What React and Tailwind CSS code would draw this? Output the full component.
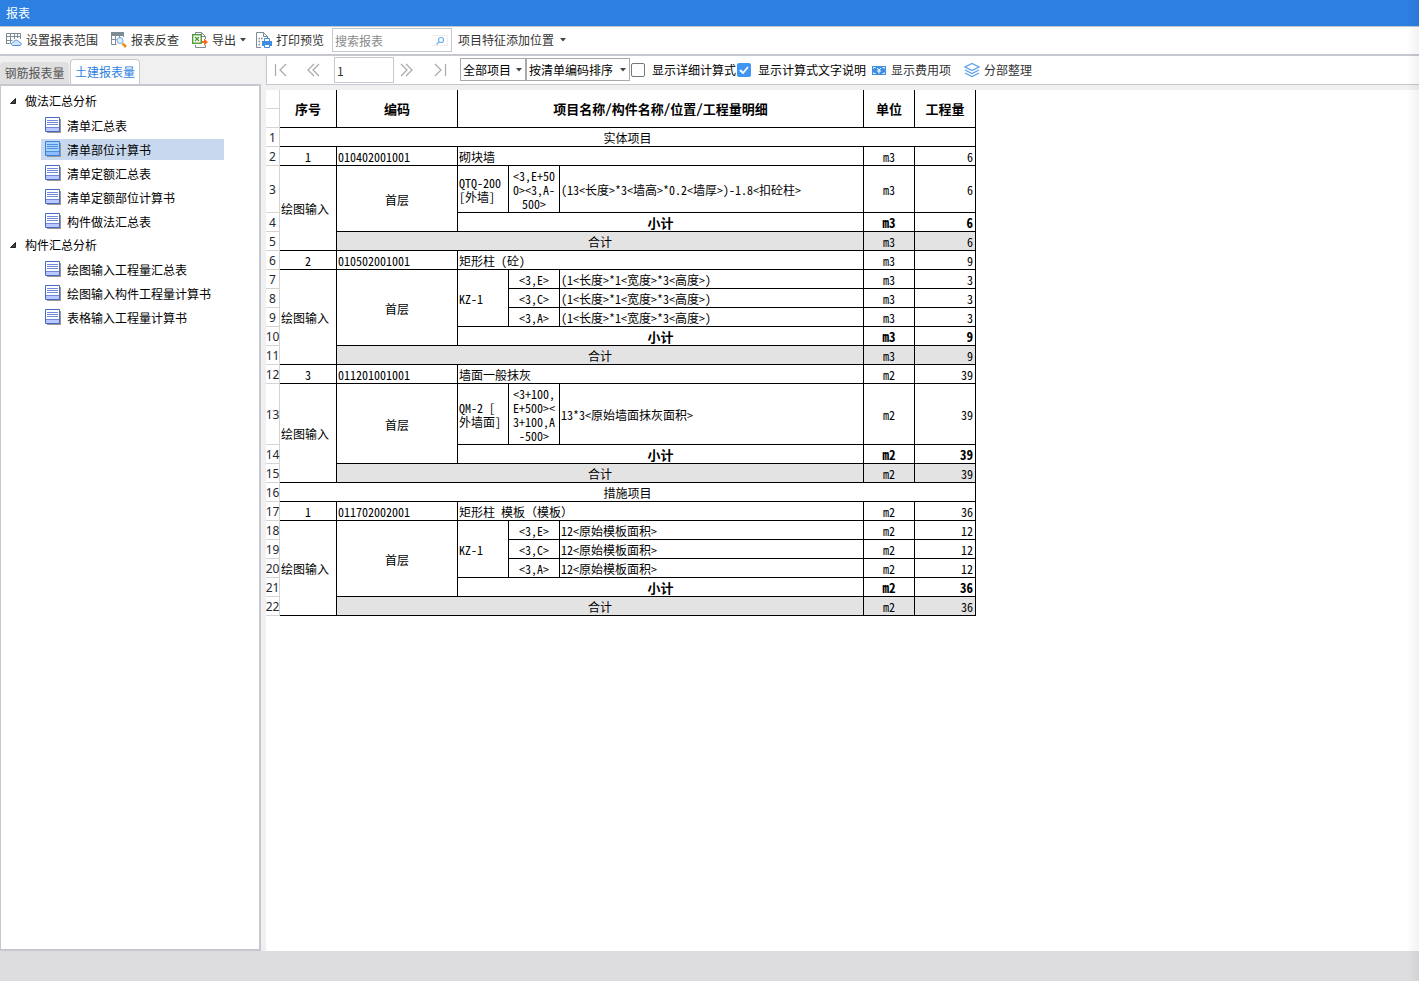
import React, { useState } from "react";

// Tree on the left side
const treeData = [
  {
    title: "做法汇总分析",
    items: ["清单汇总表", "清单部位计算书", "清单定额汇总表", "清单定额部位计算书", "构件做法汇总表"],
  },
  {
    title: "构件汇总分析",
    items: ["绘图输入工程量汇总表", "绘图输入构件工程量计算书", "表格输入工程量计算书"],
  },
];

// Report blocks: a section title or one bill item with its details
const reportData = [
  { section: "实体项目" },
  {
    no: "1",
    code: "010402001001",
    name: "砌块墙",
    unit: "m3",
    total: "6",
    component: "QTQ-200\n[外墙]",
    details: [
      {
        position: "<3,E+50\n0><3,A-\n500>",
        formula: "(13<长度>*3<墙高>*0.2<墙厚>)-1.8<扣砼柱>",
        value: "6",
        height: "h-[47px]",
      },
    ],
  },
  {
    no: "2",
    code: "010502001001",
    name: "矩形柱 (砼)",
    unit: "m3",
    total: "9",
    component: "KZ-1",
    details: [
      { position: "<3,E>", formula: "(1<长度>*1<宽度>*3<高度>)", value: "3" },
      { position: "<3,C>", formula: "(1<长度>*1<宽度>*3<高度>)", value: "3" },
      { position: "<3,A>", formula: "(1<长度>*1<宽度>*3<高度>)", value: "3" },
    ],
  },
  {
    no: "3",
    code: "011201001001",
    name: "墙面一般抹灰",
    unit: "m2",
    total: "39",
    component: "QM-2 [\n外墙面]",
    details: [
      {
        position: "<3+100,\nE+500><\n3+100,A\n-500>",
        formula: "13*3<原始墙面抹灰面积>",
        value: "39",
        height: "h-[61px]",
      },
    ],
  },
  { section: "措施项目" },
  {
    no: "1",
    code: "011702002001",
    name: "矩形柱 模板",
    note: "（模板）",
    unit: "m2",
    total: "36",
    component: "KZ-1",
    details: [
      { position: "<3,E>", formula: "12<原始模板面积>", value: "12" },
      { position: "<3,C>", formula: "12<原始模板面积>", value: "12" },
      { position: "<3,A>", formula: "12<原始模板面积>", value: "12" },
    ],
  },
];

const Caret = () => (
  <svg className="w-[6px] h-[4px] shrink-0" viewBox="0 0 6 4" fill="#444">
    <path d="M0 0h6L3 3.5z" />
  </svg>
);

const RangeIcon = () => (
  <svg className="w-4 h-4 shrink-0" viewBox="0 0 16 16" fill="none" stroke="#7d8b97">
    <path d="M.5 12V1.500h14V7M.5 4.500h14M.5 8.500h6M4.500 1.500v10M8.500 1.500V7M11.500 1.500V6M.5 11.500h4" />
    <path d="M6.500 13.500c-2-.8-1-3.500 1-3.300 1-2.700 4.500-2.700 5.500 0 2.500 0 3 2.500 1 3.300z" fill="#cfe4fb" stroke="#4a8fe0" />
  </svg>
);

const CheckIcon = () => (
  <svg className="w-4 h-4 shrink-0" viewBox="0 0 16 16" fill="none" stroke="#7d8b97">
    <path d="M.5 12.500V1.500h12V5M.5 7.500h5M.5 12.500h5M4.500 4v8M8.500 4v2" />
    <path d="M0 0h13v4H0z" fill="#7d8b97" stroke="none" />
    <circle cx="9" cy="8.500" r="3" fill="#dcecff" stroke="#7ba6e0" />
    <path d="M11.500 11.500l3.500 3.500" stroke="#f08c1a" strokeWidth="2.500" />
  </svg>
);

const ExportIcon = () => (
  <svg className="w-4 h-4 shrink-0" viewBox="0 0 16 16" fill="none">
    <path d="M3.500 2V.5h6l4 4V7M13.500 13v2.500h-10V13M9.500.5v4h4" stroke="#7d8b97" />
    <rect x=".7" y="2.700" width="8.500" height="8.500" fill="#fff" stroke="#4f9a32" strokeWidth="1.400" />
    <path d="M3 5l4 4M7 5L3 9" stroke="#4f9a32" strokeWidth="1.300" />
    <path d="M10 9h2V6.500l4 3.500-4 3.500V11h-2z" fill="#f26b1d" />
  </svg>
);

const PrintIcon = () => (
  <svg className="w-4 h-4 shrink-0" viewBox="0 0 16 16" fill="none">
    <path d="M5 15.500H.5V.5h7l4 4V6M7.500.5v4h4" stroke="#7d8b97" />
    <path d="M2.500 6.500h1.500M2.500 9.500h1.500M2.500 12.500h1.500M5 6.500h1.500" stroke="#7d8b97" strokeWidth="1.500" />
    <path d="M6 9h10v5H6z" fill="#3f8ce0" />
    <path d="M8.500 6.500h5v3h-5zM8.500 12.500h5v3h-5z" fill="#fff" stroke="#3f8ce0" />
  </svg>
);

const SearchIcon = () => (
  <svg className="w-4 h-[11px]" viewBox="0 0 16 11" fill="none">
    <path d="M0 .5h15.500v10H0" stroke="#eee" />
    <circle cx="9" cy="5" r="2.500" stroke="#6cb0ee" strokeWidth="1.200" />
    <path d="M7 7L4.500 9.500" stroke="#6cb0ee" strokeWidth="1.300" />
  </svg>
);

const MoneyIcon = () => (
  <svg className="w-4 h-4 shrink-0" viewBox="0 0 16 16">
    <path d="M1 4h14v9H1z" fill="#4090e2" />
    <path d="M2.500 6.500v-1h2M11.500 5.500h2v1M2.500 10.500v1h2M11.500 11.500h2v-1" fill="none" stroke="#fff" />
    <path d="M6 6l2 2 2-2M8 8v3.500M6 9h4" fill="none" stroke="#fff" />
  </svg>
);

const LayersIcon = () => (
  <svg className="w-4 h-4 shrink-0" viewBox="0 0 16 16" fill="none" stroke="#5b9fe8" strokeWidth="1.200">
    <path d="M8 1.500L15 5 8 8.500 1 5zM1 8l7 3.500L15 8M1 11l7 3.500 7-3.500" />
  </svg>
);

const ReportIcon = ({ active }) => (
  <svg className="w-4 h-4 shrink-0 self-start mt-[2px]" viewBox="0 0 16 16">
    <path d="M2 2h14v14H2z" fill="#9a9a9a" />
    <path d="M.5.5h14v14H.5z" fill={active ? "#a9d2ff" : "#fff"} stroke={active ? "#3b7fd6" : "#4a66bb"} />
    <path d="M1 11h13v3H1z" fill={active ? "#8ebcff" : "#b9c9ff"} />
    <path d="M2 3.500h11M2 5.500h11M2 7.500h11M1 10.500h13" stroke={active ? "#4f8fe0" : "#6f8bd6"} />
  </svg>
);

const NavButton = ({ label, path }) => (
  <button type="button" aria-label={label} className="w-[26px] h-6 flex items-center justify-center shrink-0">
    <svg className="w-[14px] h-[14px]" viewBox="0 0 14 14" fill="none" stroke="#aaa" strokeWidth="1.200">
      <path d={path} />
    </svg>
  </button>
);

const SelectBox = ({ label, options, width }) => (
  <div className={`relative shrink-0 ${width}`}>
    <select
      aria-label={label}
      className="appearance-none block w-full h-[23px] pl-[2px] pr-3 border border-[#a9a9a9] bg-white text-black outline-none"
    >
      {options.map((o) => (
        <option key={o}>{o}</option>
      ))}
    </select>
    <span className="absolute right-[4px] top-[10px] pointer-events-none">
      <svg className="w-[6px] h-[4px] block" viewBox="0 0 6 4" fill="#444">
        <path d="M0 0h6L3 3.500z" />
      </svg>
    </span>
  </div>
);

const CheckOption = ({ label, defaultChecked }) => (
  <label className="flex items-center shrink-0 text-black">
    <span className="relative w-[14px] h-[14px]">
      <input
        type="checkbox"
        defaultChecked={defaultChecked}
        className="peer appearance-none block w-[14px] h-[14px] rounded-xs border border-[#777] bg-white checked:bg-[#4096f5] checked:border-[#4096f5]"
      />
      <svg
        className="absolute inset-0 w-[14px] h-[14px] pointer-events-none opacity-0 peer-checked:opacity-100"
        viewBox="0 0 14 14"
        fill="none"
        stroke="#fff"
        strokeWidth="1.800"
      >
        <path d="M3 7l3 3 5-6" />
      </svg>
    </span>
    <span className="ml-[7px]">{label}</span>
  </label>
);

const RowNo = ({ children }) => (
  <th className="border-r border-b border-[#d4d4d4] bg-white p-0 pt-[2px] font-normal text-center font-['Noto_Sans',sans-serif] text-[#1f2933]">
    <span className="flex justify-center whitespace-nowrap">{children}</span>
  </th>
);

const Cell = ({ className = "", children, ...rest }) => (
  <td className={`border-r border-b border-black pt-[2px] pb-0 whitespace-pre ${className}`} {...rest}>
    {children}
  </td>
);

const ReportTable = () => {
  let line = 0;

  return (
    <table className="table-fixed w-[710px] border-separate border-spacing-0 text-black text-xs leading-[14px] [font-feature-settings:'hwid']">
      <colgroup>
        <col className="w-[14px]" />
        <col className="w-[57px]" />
        <col className="w-[121px]" />
        <col className="w-[51px]" />
        <col className="w-[51px]" />
        <col className="w-[304px]" />
        <col className="w-[51px]" />
        <col className="w-[61px]" />
      </colgroup>
      <thead className="text-[13px]">
        <tr className="h-[19px]">
          <RowNo />
          <th rowSpan={2} className="border-r border-b border-black p-0">序号</th>
          <th rowSpan={2} className="border-r border-b border-black p-0">编码</th>
          <th rowSpan={2} colSpan={3} className="border-r border-b border-black p-0">
            项目名称/构件名称/位置/工程量明细
          </th>
          <th rowSpan={2} className="border-r border-b border-black p-0">单位</th>
          <th rowSpan={2} className="border-r border-b border-black p-0">工程量</th>
        </tr>
        <tr className="h-[19px]">
          <RowNo />
        </tr>
      </thead>
      <tbody>
        {reportData.map((item, i) => {
          if (item.section) {
            return (
              <tr key={i} className="h-[19px]">
                <RowNo>{++line}</RowNo>
                <Cell colSpan={7} className="text-center">{item.section}</Cell>
              </tr>
            );
          }

          const count = item.details.length;
          return (
            <React.Fragment key={i}>
              <tr className="h-[19px]">
                <RowNo>{++line}</RowNo>
                <Cell className="text-center">{item.no}</Cell>
                <Cell className="pl-px">{item.code}</Cell>
                <Cell colSpan={3} className="pl-px">
                  {item.name}
                  {item.note && <span className="[font-feature-settings:normal]">{item.note}</span>}
                </Cell>
                <Cell className="text-center">{item.unit}</Cell>
                <Cell className="text-right pr-[2px]">{item.total}</Cell>
              </tr>

              {item.details.map((d, j) => (
                <tr key={j} className={d.height || "h-[19px]"}>
                  <RowNo>{++line}</RowNo>
                  {j === 0 && (
                    <>
                      <Cell rowSpan={count + 2} className="pl-px">绘图输入</Cell>
                      <Cell rowSpan={count + 1} className="text-center">首层</Cell>
                      <Cell rowSpan={count} className="pl-px">{item.component}</Cell>
                    </>
                  )}
                  <Cell className="text-center">{d.position}</Cell>
                  <Cell className="pl-px">{d.formula}</Cell>
                  <Cell className="text-center">{item.unit}</Cell>
                  <Cell className="text-right pr-[2px]">{d.value}</Cell>
                </tr>
              ))}

              {/* Subtotal */}
              <tr className="h-[19px]">
                <RowNo>{++line}</RowNo>
                <Cell colSpan={3} className="text-center text-[13px] font-bold">小计</Cell>
                <Cell className="text-center text-[13px] font-bold">{item.unit}</Cell>
                <Cell className="text-right pr-[2px] text-[13px] font-bold">{item.total}</Cell>
              </tr>

              {/* Total */}
              <tr className="h-[19px]">
                <RowNo>{++line}</RowNo>
                <Cell colSpan={4} className="text-center bg-[#e3e3e3]">合计</Cell>
                <Cell className="text-center bg-[#e3e3e3]">{item.unit}</Cell>
                <Cell className="text-right pr-[2px] bg-[#e3e3e3]">{item.total}</Cell>
              </tr>
            </React.Fragment>
          );
        })}
      </tbody>
    </table>
  );
};

const App = () => {
  const [selected, setSelected] = useState("清单部位计算书");
  const [page, setPage] = useState("1");

  return (
    <div className="relative min-h-screen flex flex-col bg-[#f0f0f0] text-xs text-[#333] whitespace-nowrap font-['Noto_Sans_CJK_SC',sans-serif]">
      {/* Title bar */}
      <header className="h-[27px] bg-[#2d7fe2] border-b border-[#c5c9cf] text-white flex items-center px-[6px]">
        <h1>报表</h1>
      </header>

      {/* Main toolbar */}
      <div className="h-[29px] pb-px bg-white border-b-2 border-[#c5c9cf] flex items-center pl-[6px]">
        <button type="button" className="h-6 flex items-center gap-1 mr-[13px]">
          <RangeIcon />
          设置报表范围
        </button>
        <button type="button" className="h-6 flex items-center gap-1 mr-[13px]">
          <CheckIcon />
          报表反查
        </button>
        <button type="button" className="h-6 flex items-center gap-1 mr-[10px]">
          <ExportIcon />
          导出
          <Caret />
        </button>
        <button type="button" className="h-6 flex items-center gap-1 mr-2">
          <PrintIcon />
          打印预览
        </button>
        <div className="relative w-[120px] h-6 mr-[6px]">
          <input
            type="text"
            aria-label="搜索报表"
            placeholder="搜索报表"
            className="block w-full h-full border border-[#c5c9cf] pl-[2px] pr-5 placeholder:text-[#8a8a8a] outline-none"
          />
          <button type="button" aria-label="搜索" className="absolute right-[4px] top-[7px]">
            <SearchIcon />
          </button>
        </div>
        <button type="button" className="h-6 flex items-center gap-[6px]">
          项目特征添加位置
          <Caret />
        </button>
      </div>

      <main className="flex-1 flex">
        {/* Report list */}
        <aside className="w-[261px] mr-[5px] shrink-0 flex flex-col">
          <div className="h-[28px] flex items-end gap-px">
            <button type="button" className="h-[22px] w-[69px] bg-[#e0e0e0] rounded-t-sm text-center text-[#555]">
              钢筋报表量
            </button>
            <button
              type="button"
              className="h-[25px] w-[70px] bg-white border border-b-0 border-[#c5c9cf] rounded-t-sm text-center text-[#2d7fe2]"
            >
              土建报表量
            </button>
          </div>
          <nav className="flex-1 bg-white border-2 border-l border-[#c5c9cf] pt-[3px] text-black">
            {treeData.map((group) => (
              <div key={group.title}>
                <button type="button" className="h-6 flex items-center gap-2 pl-2">
                  <svg className="w-2 h-2" viewBox="0 0 8 8" fill="#444" stroke="#222">
                    <path d="M6.500 1.500v5h-5z" />
                  </svg>
                  {group.title}
                </button>
                <ul>
                  {group.items.map((name) => (
                    <li key={name} className="h-6 pl-10 pr-[35px] pt-[2px]">
                      <button
                        type="button"
                        onClick={() => setSelected(name)}
                        className={`w-full h-[21px] pl-1 flex items-center gap-[6px] text-left ${
                          selected === name ? "bg-[#c8d8ef]" : ""
                        }`}
                      >
                        <ReportIcon active={selected === name} />
                        {name}
                      </button>
                    </li>
                  ))}
                </ul>
              </div>
            ))}
          </nav>
        </aside>

        <section className="flex-1 min-w-0 flex flex-col">
          {/* Report toolbar */}
          <div className="h-[29px] mb-[5px] bg-white border-l border-b border-[#c5c9cf] flex items-center">
            <div className="flex items-center gap-[7px] pl-px mr-[7px]">
              <NavButton label="首页" path="M1.500 1v12M12 1L6 7l6 6" />
              <NavButton label="上一页" path="M7 1L1 7l6 6M12 1L6 7l6 6" />
              <div className="flex items-center">
                <input
                  type="text"
                  aria-label="页码"
                  value={page}
                  onChange={(e) => setPage(e.target.value)}
                  className="w-[60px] h-[26px] pl-[2px] border border-[#c5c9cf] outline-none"
                />
                <NavButton label="下一页" path="M1 1l6 6-6 6M6 1l6 6-6 6" />
              </div>
              <NavButton label="末页" path="M2 1l6 6-6 6M12.500 1v12" />
            </div>
            <div className="flex self-start pt-[2px]">
              <SelectBox label="项目" options={["全部项目"]} width="w-[66px]" />
              <SelectBox label="排序" options={["按清单编码排序"]} width="w-[104px]" />
            </div>
            <div className="flex items-center gap-px ml-px mr-[5px]">
              <CheckOption label="显示详细计算式" />
              <CheckOption label="显示计算式文字说明" defaultChecked />
            </div>
            <button type="button" className="flex items-center gap-1 mr-[13px]">
              <MoneyIcon />
              显示费用项
            </button>
            <button type="button" className="flex items-center gap-1">
              <LayersIcon />
              分部整理
            </button>
          </div>

          <div className="flex-1 bg-white">
            <ReportTable />
          </div>
        </section>
      </main>

      <footer className="h-[30px] bg-[#dddddf]" />

      {/* Soft shade along the right edge */}
      <div className="absolute inset-y-0 right-0 w-3 bg-linear-to-r from-transparent to-black/5 pointer-events-none" />
    </div>
  );
};

export default App;
